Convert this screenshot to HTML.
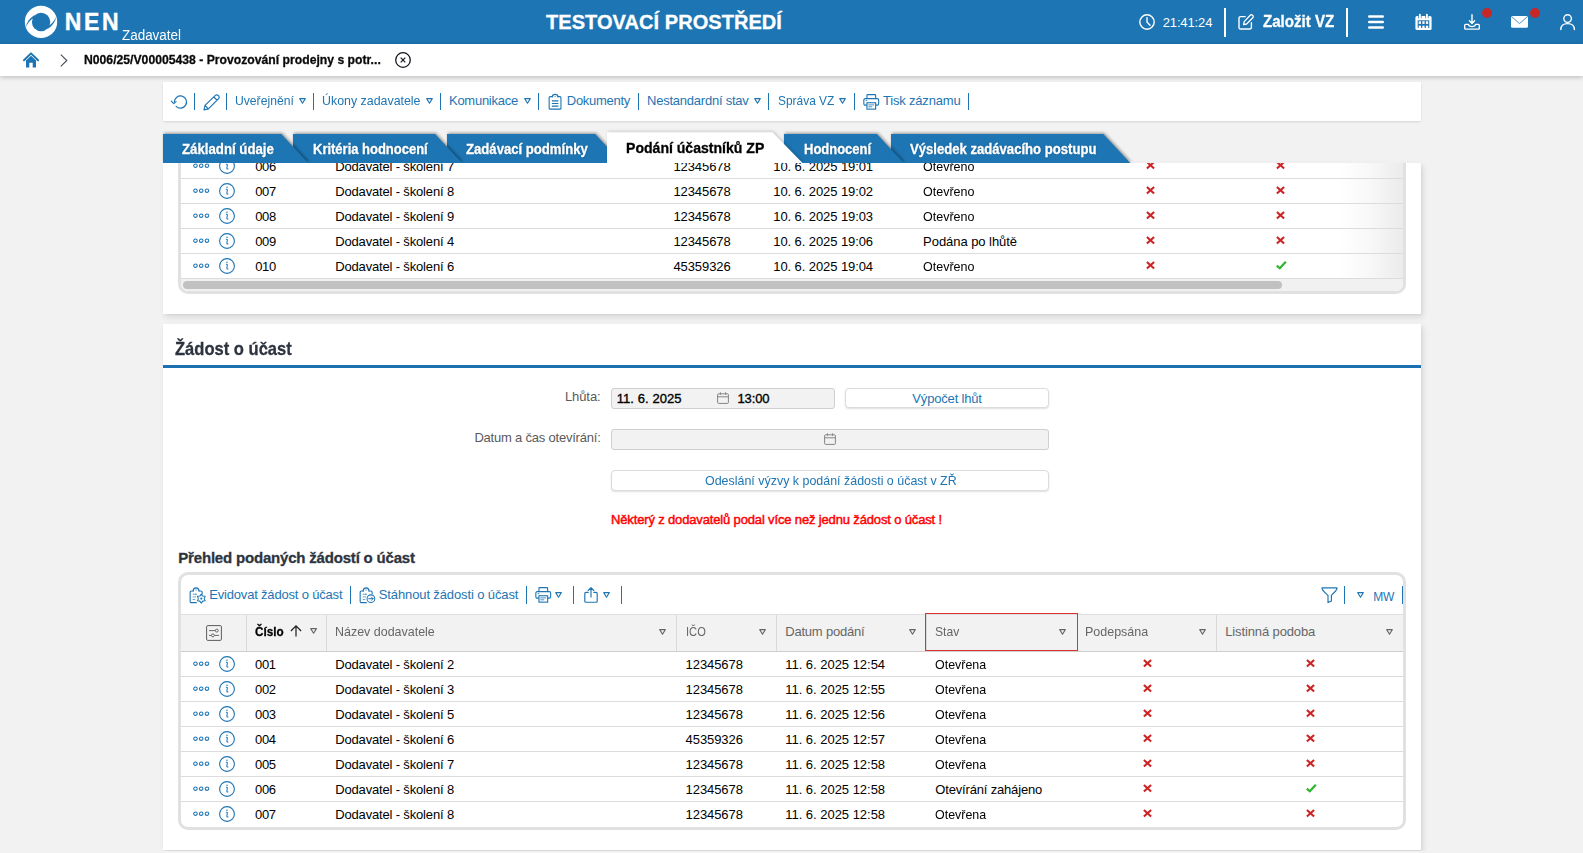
<!DOCTYPE html>
<html lang="cs">
<head>
<meta charset="utf-8">
<title>NEN - Zadavatel</title>
<style>
*{box-sizing:border-box;margin:0;padding:0}
html,body{width:1583px;height:853px;overflow:hidden}
body{background:#f2f2f2;font-family:"Liberation Sans",sans-serif;font-size:13px;color:#000;position:relative}
.abs{position:absolute}
svg{display:block;overflow:visible}
.t{position:absolute;white-space:pre;line-height:1}
</style>
</head>
<body>
<header>
<div class="abs" style="left:0;top:0;width:1583px;height:44px;background:#1d75b3"></div>
<svg class="abs" style="left:24px;top:5px" width="34" height="34" viewBox="0 0 34 34" ><circle cx="17" cy="16.9" r="16.2" fill="#fff"/><circle cx="17.1" cy="17" r="9.2" fill="#1d75b3"/><path d="M10.2 10.2 C5.5 13 2.6 17.5 1.6 22.6 C3.4 18.6 6.2 14.6 11 12.2 Z" fill="#1d75b3"/><path d="M23.8 23.8 C28.5 21 31.4 16.5 32.4 11.4 C30.6 15.4 27.8 19.4 23 21.8 Z" fill="#1d75b3"/></svg>
<span class="t" style="left:64.7px;top:11.0px;font-size:23px;font-weight:bold;color:#fff;letter-spacing:2.7px;-webkit-text-stroke:0.4px;">NEN</span>
<span class="t" style="left:122.3px;top:27.9px;font-size:14px;color:#fff;transform:scaleX(0.9596);transform-origin:0 50%;">Zadavatel</span>
<span class="t" style="left:546.0px;top:12.4px;font-size:20px;font-weight:bold;color:#fff;letter-spacing:0.06px;-webkit-text-stroke:0.3px;">TESTOVACÍ PROSTŘEDÍ</span>
<svg class="abs" style="left:1138.5px;top:14px" width="16" height="16" viewBox="0 0 16 16" ><circle cx="8" cy="8" r="7.2" fill="none" stroke="#fff" stroke-width="1.4"/><path d="M8 3.6V8l3 3.2" fill="none" stroke="#fff" stroke-width="1.4" stroke-linecap="round" stroke-linejoin="round"/></svg>
<span class="t" style="left:1162.7px;top:15.9px;font-size:13px;color:#fff;letter-spacing:-0.13px;">21:41:24</span>
<div class="abs" style="left:1224px;top:8px;width:2px;height:28.5px;background:#fff"></div>
<svg class="abs" style="left:1238px;top:14px" width="16" height="16" viewBox="0 0 16 16" ><path d="M7.2 2.6H2.6a1.6 1.6 0 0 0-1.6 1.6v9.2a1.6 1.6 0 0 0 1.6 1.6h9.2a1.6 1.6 0 0 0 1.6-1.6V8.8" fill="none" stroke="#fff" stroke-width="1.4" stroke-linecap="round"/><path d="M12.2 1.2a1.5 1.5 0 0 1 2.2 0l.4.4a1.5 1.5 0 0 1 0 2.2L8.6 10l-3 .6.6-3z" fill="none" stroke="#fff" stroke-width="1.3" stroke-linejoin="round"/></svg>
<span class="t" style="left:1262.5px;top:14.4px;font-size:16px;font-weight:bold;color:#fff;transform:scaleX(0.9436);transform-origin:0 50%;-webkit-text-stroke:0.3px;">Založit VZ</span>
<div class="abs" style="left:1346px;top:8px;width:2px;height:28.5px;background:#fff"></div>
<svg class="abs" style="left:1368px;top:14px" width="16" height="16" viewBox="0 0 16 16" ><path d="M1.2 2.5h13.6M1.2 8h13.6M1.2 13.5h13.6" stroke="#fff" stroke-width="2.4" stroke-linecap="round"/></svg>
<svg class="abs" style="left:1415px;top:14px" width="17" height="16" viewBox="0 0 17 16" ><rect x="0.400" y="2" width="16.200" height="14" rx="1.600" fill="#fff"/><rect x="2.700" y="6.300" width="11.600" height="7.600" fill="#1d75b3"/><path d="M4.900 0.500v3.800M11.900 0.500v3.800" stroke="#1d75b3" stroke-width="3.200" stroke-linecap="butt"/><path d="M4.900 0.700v3.500M11.900 0.700v3.500" stroke="#fff" stroke-width="1.900" stroke-linecap="round"/><g fill="#fff"><rect x="3.700" y="7.300" width="2.300" height="2.600"/><rect x="7.300" y="7.300" width="2.300" height="2.600"/><rect x="10.900" y="7.300" width="2.300" height="2.600"/><rect x="3.700" y="11.700" width="2.300" height="2.300"/><rect x="7.300" y="11.700" width="2.300" height="2.300"/><rect x="10.900" y="11.700" width="2.300" height="2.300"/></g></svg>
<svg class="abs" style="left:1464px;top:14px" width="16" height="16" viewBox="0 0 16 16" ><path d="M8 0.800v8.400M5.400 6.800L8 9.400l2.600-2.600" fill="none" stroke="#fff" stroke-width="1.4" stroke-linecap="round" stroke-linejoin="round"/><path d="M4.4 10.4H1.6a.9.9 0 0 0-.9.9v2.9a.9.9 0 0 0 .9.9h12.8a.9.9 0 0 0 .9-.9v-2.9a.9.9 0 0 0-.9-.9h-2.8c-.3 1.3-1.6 2.2-3.6 2.2s-3.300-.900-3.600-2.200z" fill="none" stroke="#fff" stroke-width="1.4" stroke-linejoin="round"/></svg>
<div class="abs" style="left:1482px;top:8px;width:10px;height:10px;border-radius:50%;background:#c62828"></div>
<svg class="abs" style="left:1511px;top:16px" width="17" height="12" viewBox="0 0 17 12" ><rect x="0" y="0" width="17" height="11.8" rx="1.6" fill="#fff"/><path d="M0.600 0.600L8.500 7.600L16.400 0.600" fill="none" stroke="#1d75b3" stroke-width="0.800"/></svg>
<div class="abs" style="left:1530px;top:8px;width:10px;height:10px;border-radius:50%;background:#c62828"></div>
<svg class="abs" style="left:1560px;top:14px" width="16" height="16" viewBox="0 0 16 16" ><circle cx="7.600" cy="4.600" r="3.800" fill="none" stroke="#fff" stroke-width="1.400"/><path d="M0.800 15.600C0.800 11.600 3.800 9.600 7.600 9.600s6.800 2 6.800 6" fill="none" stroke="#fff" stroke-width="1.4" stroke-linecap="round"/></svg>
</header>
<nav class="breadcrumb">
<div class="abs" style="left:0;top:44px;width:1583px;height:32px;background:#fff;box-shadow:0 1px 5px rgba(0,0,0,.25)"></div>
<svg class="abs" style="left:23px;top:52px" width="16" height="16" viewBox="0 0 16 16" ><path d="M1 8.200L8 1.400l7 6.800" fill="none" stroke="#1d75b3" stroke-width="2" stroke-linecap="round" stroke-linejoin="round"/><path d="M3 8.400L8 3.800l5 4.600V15.400H9.700V10.800H6.300V15.400H3z" fill="#1d75b3"/></svg>
<svg class="abs" style="left:60px;top:53.5px" width="8" height="13" viewBox="0 0 8 13" ><path d="M0.800 0.600L6.800 6.500L0.800 12.400" fill="none" stroke="#444a55" stroke-width="1.100"/></svg>
<span class="t" style="left:84.1px;top:53.0px;font-size:13px;font-weight:bold;color:#0a0a0a;transform:scaleX(0.9378);transform-origin:0 50%;-webkit-text-stroke:0.3px;">N006/25/V00005438 - Provozování prodejny s potr...</span>
<svg class="abs" style="left:394.5px;top:52px" width="16" height="16" viewBox="0 0 16 16" ><circle cx="8" cy="8" r="7.300" fill="none" stroke="#15151f" stroke-width="1.300"/><path d="M5.700 5.700l4.600 4.600M10.300 5.700l-4.600 4.600" stroke="#15151f" stroke-width="1.200"/></svg>
</nav>
<main>
<div class="toolbar">
<div class="abs" style="left:163px;top:82px;width:1258px;height:39px;background:#fff;box-shadow:0 1px 2px rgba(0,0,0,.12)"></div>
<svg class="abs" style="left:171px;top:94px" width="17" height="16" viewBox="0 0 17 16" ><path d="M3.350 8A6.100 6.100 0 1 1 5.090 12.310" fill="none" stroke="#1d75b3" stroke-width="1.150" stroke-linecap="round"/><path d="M0.400 7.200L2.700 9.600L5.100 7.600" fill="none" stroke="#1d75b3" stroke-width="1.150" stroke-linecap="round" stroke-linejoin="round"/></svg>
<div class="abs" style="left:194px;top:93px;width:1px;height:17px;background:#1d75b3"></div>
<div class="abs" style="left:226px;top:93px;width:1px;height:17px;background:#1d75b3"></div>
<div class="abs" style="left:313px;top:93px;width:1px;height:17px;background:#1d75b3"></div>
<div class="abs" style="left:440px;top:93px;width:1px;height:17px;background:#1d75b3"></div>
<div class="abs" style="left:538px;top:93px;width:1px;height:17px;background:#1d75b3"></div>
<div class="abs" style="left:638px;top:93px;width:1px;height:17px;background:#1d75b3"></div>
<div class="abs" style="left:768px;top:93px;width:1px;height:17px;background:#1d75b3"></div>
<div class="abs" style="left:854px;top:93px;width:1px;height:17px;background:#1d75b3"></div>
<div class="abs" style="left:968px;top:93px;width:1px;height:17px;background:#1d75b3"></div>
<svg class="abs" style="left:202.5px;top:94px" width="17" height="16" viewBox="0 0 17 16" ><path d="M12.400 1.400a1.900 1.900 0 0 1 2.700 0l.5.5a1.900 1.900 0 0 1 0 2.700L5.400 14.800L1 15.800l1-4.400zM10.800 3l3.200 3.200M2 11.400l3.400 3.400" fill="none" stroke="#1d75b3" stroke-width="1.200" stroke-linejoin="round"/></svg>
<span class="t" style="left:235.0px;top:93.6px;font-size:13px;color:#1d75b3;transform:scaleX(0.9352);transform-origin:0 50%;">Uveřejnění</span>
<svg class="abs" style="left:298.5px;top:98px" width="7" height="5.8" viewBox="0 0 7 5.8" ><path d="M0.7 0.6H6.3 L3.5 5.2 Z" fill="none" stroke="#1d75b3" stroke-width="1.1" stroke-linejoin="round"/></svg>
<span class="t" style="left:322.2px;top:93.6px;font-size:13px;color:#1d75b3;transform:scaleX(0.9531);transform-origin:0 50%;">Úkony zadavatele</span>
<svg class="abs" style="left:425.5px;top:98px" width="7" height="5.8" viewBox="0 0 7 5.8" ><path d="M0.7 0.6H6.3 L3.5 5.2 Z" fill="none" stroke="#1d75b3" stroke-width="1.1" stroke-linejoin="round"/></svg>
<span class="t" style="left:449.0px;top:93.6px;font-size:13px;color:#1d75b3;letter-spacing:-0.27px;">Komunikace</span>
<svg class="abs" style="left:523.8px;top:98px" width="7" height="5.8" viewBox="0 0 7 5.8" ><path d="M0.7 0.6H6.3 L3.5 5.2 Z" fill="none" stroke="#1d75b3" stroke-width="1.1" stroke-linejoin="round"/></svg>
<svg class="abs" style="left:547.5px;top:94px" width="14" height="16" viewBox="0 0 14 16" ><path d="M4.400 2.650H2.150a1 1 0 0 0-1 1V14.150a1 1 0 0 0 1 1H11.950a1 1 0 0 0 1-1V3.650a1 1 0 0 0-1-1H9.900" fill="none" stroke="#1d75b3" stroke-width="1.100" stroke-linecap="round"/><path d="M4.400 2.650C4.400 0.900 5.600 0.400 7.150 0.400C8.700 0.400 9.900 0.900 9.900 2.650" fill="none" stroke="#1d75b3" stroke-width="1.100" stroke-linecap="round"/><circle cx="7.100" cy="2.500" r="0.550" fill="#1d75b3"/><path d="M3.900 6.900h6.500M3.900 9.500h6.500M3.900 12.100h6.500" stroke="#1d75b3" stroke-width="1.100"/></svg>
<span class="t" style="left:566.8px;top:93.6px;font-size:13px;color:#1d75b3;letter-spacing:-0.28px;">Dokumenty</span>
<span class="t" style="left:647.0px;top:93.6px;font-size:13px;color:#1d75b3;letter-spacing:-0.23px;">Nestandardní stav</span>
<svg class="abs" style="left:754px;top:98px" width="7" height="5.8" viewBox="0 0 7 5.8" ><path d="M0.7 0.6H6.3 L3.5 5.2 Z" fill="none" stroke="#1d75b3" stroke-width="1.1" stroke-linejoin="round"/></svg>
<span class="t" style="left:777.7px;top:93.6px;font-size:13px;color:#1d75b3;transform:scaleX(0.9166);transform-origin:0 50%;">Správa VZ</span>
<svg class="abs" style="left:839.3px;top:98px" width="7" height="5.8" viewBox="0 0 7 5.8" ><path d="M0.7 0.6H6.3 L3.5 5.2 Z" fill="none" stroke="#1d75b3" stroke-width="1.1" stroke-linejoin="round"/></svg>
<svg class="abs" style="left:862.5px;top:94px" width="17" height="16" viewBox="0 0 17 16" ><path d="M3.950 4.600V1.250a.6.600 0 0 1 .600-.600h7.500a.600.600 0 0 1 .600.600V4.600" fill="none" stroke="#1d75b3" stroke-width="1.100"/><path d="M3.950 11.150H2.150a1.300 1.300 0 0 1-1.300-1.300V5.950a1.300 1.300 0 0 1 1.300-1.300H14.350a1.300 1.300 0 0 1 1.300 1.300V9.850a1.300 1.300 0 0 1-1.300 1.300H12.650" fill="none" stroke="#1d75b3" stroke-width="1.100"/><rect x="3.950" y="8.750" width="8.700" height="6.400" fill="none" stroke="#1d75b3" stroke-width="1.100"/><path d="M5.300 10.900h5.900M5.300 12.800h3.900" stroke="#1d75b3" stroke-width="0.800"/><path d="M2.700 6.500h1.600" stroke="#1d75b3" stroke-width="0.800"/></svg>
<span class="t" style="left:882.9px;top:93.6px;font-size:13px;color:#1d75b3;letter-spacing:-0.18px;">Tisk záznamu</span>
</div>
<section class="tabpanel">
<div class="abs" style="left:163px;top:163px;width:1258px;height:151px;background:#fff;box-shadow:2px 3px 6px rgba(0,0,0,.11),1px 1px 2px rgba(0,0,0,.04);overflow:hidden">
<div class="abs" style="left:15px;top:-40px;width:1228px;height:171px;border:3px solid #dfe1e3;border-radius:0 0 10px 10px;background:#fff"></div>
<div class="abs" style="left:1176px;top:0;width:64px;height:115px;background:linear-gradient(90deg,rgba(230,230,230,0) 0%,rgba(234,234,234,.3) 45%,rgba(234,234,234,.95) 100%)"></div>
<div class="abs" style="left:18px;top:15px;width:1222px;height:1px;background:#dcdcdc"></div>
<div class="abs" style="left:18px;top:40px;width:1222px;height:1px;background:#dcdcdc"></div>
<div class="abs" style="left:18px;top:65px;width:1222px;height:1px;background:#dcdcdc"></div>
<div class="abs" style="left:18px;top:90px;width:1222px;height:1px;background:#dcdcdc"></div>
<div class="abs" style="left:18px;top:115px;width:1222px;height:1px;background:#dcdcdc"></div>
<div class="abs" style="left:18px;top:116px;width:1222px;height:12px;background:#f1f1f1;border-radius:0 0 7px 7px"></div>
<div class="abs" style="left:20px;top:118px;width:1099px;height:8px;background:#c1c1c1;border-radius:4px"></div>
</div>
<div class="abs" style="left:0;top:163px;width:1583px;height:130px;overflow:hidden">
<svg class="abs" style="left:192.8px;top:-0.05px" width="17" height="5.4" viewBox="0 0 17 5.4" ><g fill="none" stroke="#1d75b3" stroke-width="1.050"><ellipse cx="2.450" cy="2.700" rx="1.800" ry="1.680"/><ellipse cx="8.200" cy="2.700" rx="1.800" ry="1.680"/><ellipse cx="14" cy="2.700" rx="1.800" ry="1.680"/></g></svg>
<svg class="abs" style="left:219px;top:-5px" width="16" height="16" viewBox="0 0 16 16" ><circle cx="8" cy="8" r="7.400" fill="none" stroke="#1d75b3" stroke-width="1.100"/><path d="M7.300 6.300c.9-.1 1.100.2 1 .9L7.900 10c-.1.800.2 1.100 1 .9" fill="none" stroke="#1d75b3" stroke-width="1.050" stroke-linecap="round"/><circle cx="8" cy="4.300" r=".750" fill="#1d75b3"/></svg>
<span class="t" style="left:255.2px;top:-3.1px;font-size:13px;letter-spacing:-0.35px;">006</span>
<span class="t" style="left:335.2px;top:-3.1px;font-size:13px;letter-spacing:-0.16px;">Dodavatel - školení 7</span>
<span class="t" style="left:673.4px;top:-3.1px;font-size:13px;letter-spacing:-0.08px;">12345678</span>
<span class="t" style="left:773.3px;top:-3.1px;font-size:13px;letter-spacing:-0.09px;">10. 6. 2025 19:01</span>
<span class="t" style="left:923.1px;top:-3.1px;font-size:13px;transform:scaleX(0.9629);transform-origin:0 50%;">Otevřeno</span>
<svg class="abs" style="left:1145.9px;top:-2.2px" width="9" height="8.4" viewBox="0 0 9 8.4" ><path d="M0.900 0.900L8.100 7.500M8.100 0.900L0.900 7.500" stroke="#cc2424" stroke-width="2.100" stroke-linecap="butt"/></svg>
<svg class="abs" style="left:1276px;top:-2.2px" width="9" height="8.4" viewBox="0 0 9 8.4" ><path d="M0.900 0.900L8.100 7.500M8.100 0.900L0.900 7.500" stroke="#cc2424" stroke-width="2.100" stroke-linecap="butt"/></svg>
<svg class="abs" style="left:192.8px;top:24.95px" width="17" height="5.4" viewBox="0 0 17 5.4" ><g fill="none" stroke="#1d75b3" stroke-width="1.050"><ellipse cx="2.450" cy="2.700" rx="1.800" ry="1.680"/><ellipse cx="8.200" cy="2.700" rx="1.800" ry="1.680"/><ellipse cx="14" cy="2.700" rx="1.800" ry="1.680"/></g></svg>
<svg class="abs" style="left:219px;top:20px" width="16" height="16" viewBox="0 0 16 16" ><circle cx="8" cy="8" r="7.400" fill="none" stroke="#1d75b3" stroke-width="1.100"/><path d="M7.300 6.300c.9-.1 1.100.2 1 .9L7.900 10c-.1.800.2 1.100 1 .9" fill="none" stroke="#1d75b3" stroke-width="1.050" stroke-linecap="round"/><circle cx="8" cy="4.300" r=".750" fill="#1d75b3"/></svg>
<span class="t" style="left:255.2px;top:21.9px;font-size:13px;letter-spacing:-0.35px;">007</span>
<span class="t" style="left:335.2px;top:21.9px;font-size:13px;letter-spacing:-0.16px;">Dodavatel - školení 8</span>
<span class="t" style="left:673.4px;top:21.9px;font-size:13px;letter-spacing:-0.08px;">12345678</span>
<span class="t" style="left:773.3px;top:21.9px;font-size:13px;letter-spacing:-0.09px;">10. 6. 2025 19:02</span>
<span class="t" style="left:923.1px;top:21.9px;font-size:13px;transform:scaleX(0.9629);transform-origin:0 50%;">Otevřeno</span>
<svg class="abs" style="left:1145.9px;top:22.8px" width="9" height="8.4" viewBox="0 0 9 8.4" ><path d="M0.900 0.900L8.100 7.500M8.100 0.900L0.900 7.500" stroke="#cc2424" stroke-width="2.100" stroke-linecap="butt"/></svg>
<svg class="abs" style="left:1276px;top:22.8px" width="9" height="8.4" viewBox="0 0 9 8.4" ><path d="M0.900 0.900L8.100 7.500M8.100 0.900L0.900 7.500" stroke="#cc2424" stroke-width="2.100" stroke-linecap="butt"/></svg>
<svg class="abs" style="left:192.8px;top:49.95px" width="17" height="5.4" viewBox="0 0 17 5.4" ><g fill="none" stroke="#1d75b3" stroke-width="1.050"><ellipse cx="2.450" cy="2.700" rx="1.800" ry="1.680"/><ellipse cx="8.200" cy="2.700" rx="1.800" ry="1.680"/><ellipse cx="14" cy="2.700" rx="1.800" ry="1.680"/></g></svg>
<svg class="abs" style="left:219px;top:45px" width="16" height="16" viewBox="0 0 16 16" ><circle cx="8" cy="8" r="7.400" fill="none" stroke="#1d75b3" stroke-width="1.100"/><path d="M7.300 6.300c.9-.1 1.100.2 1 .9L7.900 10c-.1.800.2 1.100 1 .9" fill="none" stroke="#1d75b3" stroke-width="1.050" stroke-linecap="round"/><circle cx="8" cy="4.300" r=".750" fill="#1d75b3"/></svg>
<span class="t" style="left:255.2px;top:46.9px;font-size:13px;letter-spacing:-0.35px;">008</span>
<span class="t" style="left:335.2px;top:46.9px;font-size:13px;letter-spacing:-0.16px;">Dodavatel - školení 9</span>
<span class="t" style="left:673.4px;top:46.9px;font-size:13px;letter-spacing:-0.08px;">12345678</span>
<span class="t" style="left:773.3px;top:46.9px;font-size:13px;letter-spacing:-0.09px;">10. 6. 2025 19:03</span>
<span class="t" style="left:923.1px;top:46.9px;font-size:13px;transform:scaleX(0.9629);transform-origin:0 50%;">Otevřeno</span>
<svg class="abs" style="left:1145.9px;top:47.8px" width="9" height="8.4" viewBox="0 0 9 8.4" ><path d="M0.900 0.900L8.100 7.500M8.100 0.900L0.900 7.500" stroke="#cc2424" stroke-width="2.100" stroke-linecap="butt"/></svg>
<svg class="abs" style="left:1276px;top:47.8px" width="9" height="8.4" viewBox="0 0 9 8.4" ><path d="M0.900 0.900L8.100 7.500M8.100 0.900L0.900 7.500" stroke="#cc2424" stroke-width="2.100" stroke-linecap="butt"/></svg>
<svg class="abs" style="left:192.8px;top:74.95px" width="17" height="5.4" viewBox="0 0 17 5.4" ><g fill="none" stroke="#1d75b3" stroke-width="1.050"><ellipse cx="2.450" cy="2.700" rx="1.800" ry="1.680"/><ellipse cx="8.200" cy="2.700" rx="1.800" ry="1.680"/><ellipse cx="14" cy="2.700" rx="1.800" ry="1.680"/></g></svg>
<svg class="abs" style="left:219px;top:70px" width="16" height="16" viewBox="0 0 16 16" ><circle cx="8" cy="8" r="7.400" fill="none" stroke="#1d75b3" stroke-width="1.100"/><path d="M7.300 6.300c.9-.1 1.100.2 1 .9L7.900 10c-.1.800.2 1.100 1 .9" fill="none" stroke="#1d75b3" stroke-width="1.050" stroke-linecap="round"/><circle cx="8" cy="4.300" r=".750" fill="#1d75b3"/></svg>
<span class="t" style="left:255.2px;top:71.9px;font-size:13px;letter-spacing:-0.35px;">009</span>
<span class="t" style="left:335.2px;top:71.9px;font-size:13px;letter-spacing:-0.16px;">Dodavatel - školení 4</span>
<span class="t" style="left:673.4px;top:71.9px;font-size:13px;letter-spacing:-0.08px;">12345678</span>
<span class="t" style="left:773.3px;top:71.9px;font-size:13px;letter-spacing:-0.09px;">10. 6. 2025 19:06</span>
<span class="t" style="left:923.1px;top:71.9px;font-size:13px;letter-spacing:-0.05px;">Podána po lhůtě</span>
<svg class="abs" style="left:1145.9px;top:72.8px" width="9" height="8.4" viewBox="0 0 9 8.4" ><path d="M0.900 0.900L8.100 7.500M8.100 0.900L0.900 7.500" stroke="#cc2424" stroke-width="2.100" stroke-linecap="butt"/></svg>
<svg class="abs" style="left:1276px;top:72.8px" width="9" height="8.4" viewBox="0 0 9 8.4" ><path d="M0.900 0.900L8.100 7.500M8.100 0.900L0.900 7.500" stroke="#cc2424" stroke-width="2.100" stroke-linecap="butt"/></svg>
<svg class="abs" style="left:192.8px;top:99.95px" width="17" height="5.4" viewBox="0 0 17 5.4" ><g fill="none" stroke="#1d75b3" stroke-width="1.050"><ellipse cx="2.450" cy="2.700" rx="1.800" ry="1.680"/><ellipse cx="8.200" cy="2.700" rx="1.800" ry="1.680"/><ellipse cx="14" cy="2.700" rx="1.800" ry="1.680"/></g></svg>
<svg class="abs" style="left:219px;top:95px" width="16" height="16" viewBox="0 0 16 16" ><circle cx="8" cy="8" r="7.400" fill="none" stroke="#1d75b3" stroke-width="1.100"/><path d="M7.300 6.300c.9-.1 1.100.2 1 .9L7.900 10c-.1.800.2 1.100 1 .9" fill="none" stroke="#1d75b3" stroke-width="1.050" stroke-linecap="round"/><circle cx="8" cy="4.300" r=".750" fill="#1d75b3"/></svg>
<span class="t" style="left:255.2px;top:96.9px;font-size:13px;letter-spacing:-0.35px;">010</span>
<span class="t" style="left:335.2px;top:96.9px;font-size:13px;letter-spacing:-0.16px;">Dodavatel - školení 6</span>
<span class="t" style="left:673.4px;top:96.9px;font-size:13px;letter-spacing:-0.08px;">45359326</span>
<span class="t" style="left:773.3px;top:96.9px;font-size:13px;letter-spacing:-0.09px;">10. 6. 2025 19:04</span>
<span class="t" style="left:923.1px;top:96.9px;font-size:13px;transform:scaleX(0.9629);transform-origin:0 50%;">Otevřeno</span>
<svg class="abs" style="left:1145.9px;top:97.8px" width="9" height="8.4" viewBox="0 0 9 8.4" ><path d="M0.900 0.900L8.100 7.500M8.100 0.900L0.900 7.500" stroke="#cc2424" stroke-width="2.100" stroke-linecap="butt"/></svg>
<svg class="abs" style="left:1276.2px;top:97.8px" width="10.5" height="8.4" viewBox="0 0 10.5 8.4" ><path d="M0.800 4.600L3.800 7.300L9.800 0.800" fill="none" stroke="#2eb52e" stroke-width="2.200"/></svg>
</div>
<div class="abs" style="left:0;top:0;width:1583px;height:163px;overflow:hidden">
<svg class="abs" style="left:447.2px;top:128px;filter:drop-shadow(1.500px -0.5px 1.500px rgba(0,0,0,.38))" width="181.2" height="35" viewBox="0 0 181.2 35"><path d="M0 6H148.2 L175.2 35H0z" fill="#1d75b3"/></svg><span class="t" style="left:466.0px;top:142.4px;font-size:14px;font-weight:bold;color:#fff;transform:scaleX(0.9374);transform-origin:0 50%;text-shadow:0 0 2px rgba(0,0,0,.3);-webkit-text-stroke:0.3px;">Zadávací podmínky</span>
<svg class="abs" style="left:292.7px;top:128px;filter:drop-shadow(1.500px -0.5px 1.500px rgba(0,0,0,.38))" width="175.1" height="35" viewBox="0 0 175.1 35"><path d="M0 6H142.1 L169.1 35H0z" fill="#1d75b3"/></svg><span class="t" style="left:312.5px;top:142.4px;font-size:14px;font-weight:bold;color:#fff;transform:scaleX(0.9273);transform-origin:0 50%;text-shadow:0 0 2px rgba(0,0,0,.3);-webkit-text-stroke:0.3px;">Kritéria hodnocení</span>
<svg class="abs" style="left:163px;top:128px;filter:drop-shadow(1.500px -0.5px 1.500px rgba(0,0,0,.38))" width="151.3" height="35" viewBox="0 0 151.3 35"><path d="M0 6H118.3 L145.3 35H0z" fill="#1d75b3"/></svg><span class="t" style="left:181.8px;top:142.4px;font-size:14px;font-weight:bold;color:#fff;transform:scaleX(0.9450);transform-origin:0 50%;text-shadow:0 0 2px rgba(0,0,0,.3);-webkit-text-stroke:0.3px;">Základní údaje</span>
<svg class="abs" style="left:890.5px;top:128px;filter:drop-shadow(1.500px -0.5px 1.500px rgba(0,0,0,.38))" width="245.3" height="35" viewBox="0 0 245.3 35"><path d="M0 6H212.3 L239.3 35H0z" fill="#1d75b3"/></svg><span class="t" style="left:909.6px;top:142.4px;font-size:14px;font-weight:bold;color:#fff;transform:scaleX(0.9359);transform-origin:0 50%;text-shadow:0 0 2px rgba(0,0,0,.3);-webkit-text-stroke:0.3px;">Výsledek zadávacího postupu</span>
<svg class="abs" style="left:784.4px;top:128px;filter:drop-shadow(1.500px -0.5px 1.500px rgba(0,0,0,.38))" width="125.9" height="35" viewBox="0 0 125.9 35"><path d="M0 6H92.9 L119.9 35H0z" fill="#1d75b3"/></svg><span class="t" style="left:803.5px;top:142.4px;font-size:14px;font-weight:bold;color:#fff;transform:scaleX(0.9275);transform-origin:0 50%;text-shadow:0 0 2px rgba(0,0,0,.3);-webkit-text-stroke:0.3px;">Hodnocení</span>
<svg class="abs" style="left:607px;top:126px;filter:drop-shadow(1px -0.5px 1.500px rgba(0,0,0,.16))" width="200" height="37" viewBox="0 0 200 37"><path d="M0 6.200H165.500L195.500 37H0z" fill="#fff"/></svg>
<span class="t" style="left:625.7px;top:140.3px;font-size:15px;font-weight:bold;transform:scaleX(0.9374);transform-origin:0 50%;-webkit-text-stroke:0.3px;">Podání účastníků ZP</span>
</div>
</section>
<section class="zadost">
<div class="abs" style="left:163px;top:324px;width:1258px;height:526px;background:#fff;box-shadow:2px 3px 6px rgba(0,0,0,.11),1px 1px 2px rgba(0,0,0,.04);clip-path:inset(-10px -10px -1px -10px)"></div>
<span class="t" style="left:175.2px;top:339.9px;font-size:18.5px;font-weight:bold;color:#2d3440;transform:scaleX(0.8946);transform-origin:0 50%;-webkit-text-stroke:0.3px;">Žádost o účast</span>
<div class="abs" style="left:163px;top:365px;width:1258px;height:3px;background:#1a70b0"></div>
<span class="t" style="left:564.9px;top:389.7px;font-size:13px;color:#5a5a5a;letter-spacing:-0.07px;">Lhůta:</span>
<span class="t" style="left:474.4px;top:430.9px;font-size:13px;color:#5a5a5a;letter-spacing:-0.21px;">Datum a čas otevírání:</span>
<div class="abs" style="left:611px;top:388px;width:224px;height:21px;background:#f2f2f2;border:1px solid #cfcfcf;border-radius:3px"></div>
<div class="abs" style="left:845px;top:388px;width:204px;height:20px;background:#fff;border:1px solid #dcdcdc;border-radius:4px;box-shadow:0 1px 2px rgba(0,0,0,.13)"></div>
<div class="abs" style="left:611px;top:429px;width:438px;height:21px;background:#f2f2f2;border:1px solid #cfcfcf;border-radius:3px"></div>
<div class="abs" style="left:611px;top:470px;width:438px;height:21px;background:#fff;border:1px solid #dcdcdc;border-radius:4px;box-shadow:0 1px 2px rgba(0,0,0,.13)"></div>
<span class="t" style="left:616.7px;top:392.2px;font-size:13px;letter-spacing:0.08px;-webkit-text-stroke:0.35px #000;">11. 6. 2025</span>
<span class="t" style="left:737.4px;top:392.2px;font-size:13px;letter-spacing:-0.11px;-webkit-text-stroke:0.35px #000;">13:00</span>
<svg class="abs" style="left:717px;top:392px" width="12" height="12" viewBox="0 0 12 12" ><rect x=".6" y="1.800" width="10.800" height="9.600" rx="1" fill="none" stroke="#858585" stroke-width="1"/><path d="M.6 4.800h10.800M3.400 .3v2.600M8.600 .3v2.600" stroke="#858585" stroke-width="1"/></svg>
<svg class="abs" style="left:824px;top:433px" width="12" height="12" viewBox="0 0 12 12" ><rect x=".6" y="1.800" width="10.800" height="9.600" rx="1" fill="none" stroke="#858585" stroke-width="1"/><path d="M.6 4.800h10.800M3.400 .3v2.600M8.600 .3v2.600" stroke="#858585" stroke-width="1"/></svg>
<span class="t" style="left:912.3px;top:391.9px;font-size:13px;color:#1d75b3;letter-spacing:-0.17px;">Výpočet lhůt</span>
<span class="t" style="left:704.6px;top:474.0px;font-size:13px;color:#1d75b3;transform:scaleX(0.9570);transform-origin:0 50%;">Odeslání výzvy k podání žádosti o účast v ZŘ</span>
<span class="t" style="left:611.0px;top:513.0px;font-size:13px;color:#ff0000;letter-spacing:-0.15px;-webkit-text-stroke:0.45px;">Některý z dodavatelů podal více než jednu žádost o účast !</span>
<span class="t" style="left:178.3px;top:550.0px;font-size:15px;font-weight:bold;color:#2d3440;letter-spacing:-0.19px;-webkit-text-stroke:0.3px;">Přehled podaných žádostí o účast</span>
<div class="abs" style="left:178px;top:572px;width:1228px;height:258px;border:3px solid #dfe1e3;border-radius:10px;background:#fff"></div>
<svg class="abs" style="left:188.5px;top:586.5px" width="17" height="17" viewBox="0 0 17 17" ><path d="M4.200 3.950H2.450a1.300 1.300 0 0 0-1.300 1.300V14.350a1.300 1.300 0 0 0 1.300 1.300H7.300M10 3.950H11.850a1.300 1.300 0 0 1 1.300 1.300V6.700" fill="none" stroke="#1d75b3" stroke-width="1.100" stroke-linecap="round"/><path d="M4.200 3.950C4.200 1.700 5.500 0.850 7.100 0.850C8.700 0.850 10 1.700 10 3.950" fill="none" stroke="#1d75b3" stroke-width="1.100" stroke-linecap="round"/><circle cx="7.100" cy="2.900" r="0.550" fill="#1d75b3"/><path d="M3.800 7.200h0.900M5.400 7.200h2.300M3.800 9.900h0.900M5.400 9.900h1.300M3.800 12.500h0.900M5.400 12.500h0.800" stroke="#1d75b3" stroke-width="1"/><path d="M12.30 7.10 L13.75 9.09 L16.20 9.35 L15.20 11.60 L16.20 13.85 L13.75 14.11 L12.30 16.10 L10.85 14.11 L8.40 13.85 L9.40 11.60 L8.40 9.35 L10.85 9.09 Z" fill="#fff" stroke="#1d75b3" stroke-width="1.050" stroke-linejoin="round"/><circle cx="12.3" cy="11.6" r="1.100" fill="#1d75b3"/></svg>
<span class="t" style="left:209.2px;top:587.7px;font-size:13px;color:#1d75b3;letter-spacing:-0.18px;">Evidovat žádost o účast</span>
<div class="abs" style="left:350px;top:586px;width:1px;height:18px;background:#1d75b3"></div>
<svg class="abs" style="left:358.5px;top:586.5px" width="17" height="17" viewBox="0 0 17 17" ><path d="M4.200 3.950H2.450a1.300 1.300 0 0 0-1.300 1.300V14.350a1.300 1.300 0 0 0 1.300 1.300H7.300M10 3.950H11.850a1.300 1.300 0 0 1 1.300 1.300V6.700" fill="none" stroke="#1d75b3" stroke-width="1.100" stroke-linecap="round"/><path d="M4.200 3.950C4.200 1.700 5.500 0.850 7.100 0.850C8.700 0.850 10 1.700 10 3.950" fill="none" stroke="#1d75b3" stroke-width="1.100" stroke-linecap="round"/><circle cx="7.100" cy="2.900" r="0.550" fill="#1d75b3"/><path d="M3.800 7.200h0.900M5.400 7.200h2.300M3.800 9.900h0.900M5.400 9.900h1.300M3.800 12.500h0.900M5.400 12.500h0.800" stroke="#1d75b3" stroke-width="1"/><circle cx="11.900" cy="11.700" r="3.850" fill="#fff" stroke="#1d75b3" stroke-width="1.050"/><path d="M9.700 11.700h4.200M12.500 10.100l1.600 1.600-1.600 1.600" fill="none" stroke="#1d75b3" stroke-width="1" stroke-linecap="round" stroke-linejoin="round"/></svg>
<span class="t" style="left:378.8px;top:587.7px;font-size:13px;color:#1d75b3;letter-spacing:-0.12px;">Stáhnout žádosti o účast</span>
<div class="abs" style="left:526px;top:586px;width:1px;height:18px;background:#1d75b3"></div>
<svg class="abs" style="left:534.7px;top:587px" width="17" height="16" viewBox="0 0 17 16" ><path d="M3.950 4.600V1.250a.6.600 0 0 1 .600-.600h7.500a.600.600 0 0 1 .600.600V4.600" fill="none" stroke="#1d75b3" stroke-width="1.100"/><path d="M3.950 11.150H2.150a1.300 1.300 0 0 1-1.300-1.300V5.950a1.300 1.300 0 0 1 1.300-1.300H14.350a1.300 1.300 0 0 1 1.300 1.300V9.850a1.300 1.300 0 0 1-1.300 1.300H12.650" fill="none" stroke="#1d75b3" stroke-width="1.100"/><rect x="3.950" y="8.750" width="8.700" height="6.400" fill="none" stroke="#1d75b3" stroke-width="1.100"/><path d="M5.300 10.900h5.900M5.300 12.800h3.900" stroke="#1d75b3" stroke-width="0.800"/><path d="M2.700 6.500h1.600" stroke="#1d75b3" stroke-width="0.800"/></svg>
<svg class="abs" style="left:555.2px;top:592.3px" width="7" height="5.8" viewBox="0 0 7 5.8" ><path d="M0.7 0.6H6.3 L3.5 5.2 Z" fill="none" stroke="#1d75b3" stroke-width="1.1" stroke-linejoin="round"/></svg>
<div class="abs" style="left:573px;top:586px;width:1px;height:18px;background:#1d75b3"></div>
<svg class="abs" style="left:584px;top:587px" width="14" height="16" viewBox="0 0 14 16" ><path d="M4.200 5.400H1.800a1 1 0 0 0-1 1v7.800a1 1 0 0 0 1 1h10.400a1 1 0 0 0 1-1V6.400a1 1 0 0 0-1-1H9.800" fill="none" stroke="#1d75b3" stroke-width="1.150" stroke-linecap="round"/><path d="M7 10V0.900M4.200 3.500L7 .7l2.800 2.800" fill="none" stroke="#1d75b3" stroke-width="1.150" stroke-linecap="round" stroke-linejoin="round"/></svg>
<svg class="abs" style="left:603.2px;top:592.3px" width="7" height="5.8" viewBox="0 0 7 5.8" ><path d="M0.7 0.6H6.3 L3.5 5.2 Z" fill="none" stroke="#1d75b3" stroke-width="1.1" stroke-linejoin="round"/></svg>
<div class="abs" style="left:621px;top:586px;width:1px;height:18px;background:#1d75b3"></div>
<svg class="abs" style="left:1320.5px;top:587px" width="17" height="16" viewBox="0 0 17 16" ><path d="M1 .8h15c.300 2.600-3 4.600-5.600 7.600V14L7 15.600V8.400C4 5.400.7 3.400 1 .8z" fill="none" stroke="#1d75b3" stroke-width="1.150" stroke-linejoin="round"/></svg>
<div class="abs" style="left:1344px;top:586px;width:1px;height:18px;background:#1d75b3"></div>
<svg class="abs" style="left:1357.1px;top:592.2px" width="7" height="5.8" viewBox="0 0 7 5.8" ><path d="M0.7 0.6H6.3 L3.5 5.2 Z" fill="none" stroke="#1d75b3" stroke-width="1.1" stroke-linejoin="round"/></svg>
<span class="t" style="left:1373.3px;top:591.2px;font-size:12px;color:#1d75b3;letter-spacing:-0.23px;">MW</span>
<div class="abs" style="left:1402px;top:586px;width:1px;height:18px;background:#1d75b3"></div>
<div class="abs" style="left:181px;top:614px;width:1222px;height:38px;background:#f2f2f2;border-top:1px solid #e0e0e0;border-bottom:1px solid #cfcfcf"></div>
<div class="abs" style="left:246px;top:615px;width:1px;height:36px;background:#d9d9d9"></div>
<div class="abs" style="left:326px;top:615px;width:1px;height:36px;background:#d9d9d9"></div>
<div class="abs" style="left:676px;top:615px;width:1px;height:36px;background:#d9d9d9"></div>
<div class="abs" style="left:776px;top:615px;width:1px;height:36px;background:#d9d9d9"></div>
<div class="abs" style="left:926px;top:615px;width:1px;height:36px;background:#d9d9d9"></div>
<div class="abs" style="left:1077px;top:615px;width:1px;height:36px;background:#d9d9d9"></div>
<div class="abs" style="left:1216px;top:615px;width:1px;height:36px;background:#d9d9d9"></div>
<svg class="abs" style="left:206px;top:625px" width="16" height="16" viewBox="0 0 16 16" ><rect x=".6" y=".6" width="14.800" height="14.800" rx="1.200" fill="none" stroke="#5c5c5c" stroke-width="1"/><path d="M3 5.600h6.200M3 10.400h2.200M8.600 10.400h4.400" stroke="#5c5c5c" stroke-width="0.900"/><circle cx="10.800" cy="5.600" r="1.450" fill="none" stroke="#5c5c5c" stroke-width="0.900"/><circle cx="6.900" cy="10.400" r="1.450" fill="none" stroke="#5c5c5c" stroke-width="0.900"/></svg>
<span class="t" style="left:255.1px;top:625.2px;font-size:13px;font-weight:bold;transform:scaleX(0.8995);transform-origin:0 50%;-webkit-text-stroke:0.3px;">Číslo</span>
<svg class="abs" style="left:290px;top:625px" width="12" height="12" viewBox="0 0 12 12" ><path d="M6 11.600V.9M.9 6L6 .9l5.100 5.100" fill="none" stroke="#222" stroke-width="1.250"/></svg>
<svg class="abs" style="left:309.5px;top:628.4px" width="7.2" height="5.8" viewBox="0 0 7.2 5.8" ><path d="M0.7 0.6H6.5 L3.6 5.2 Z" fill="none" stroke="#666" stroke-width="1.1" stroke-linejoin="round"/></svg>
<span class="t" style="left:335.2px;top:625.2px;font-size:13px;color:#666;transform:scaleX(0.9589);transform-origin:0 50%;">Název dodavatele</span>
<svg class="abs" style="left:659.4px;top:628.6px" width="7" height="5.8" viewBox="0 0 7 5.8" ><path d="M0.7 0.6H6.3 L3.5 5.2 Z" fill="none" stroke="#666" stroke-width="1.1" stroke-linejoin="round"/></svg>
<span class="t" style="left:685.6px;top:625.2px;font-size:13px;color:#666;transform:scaleX(0.8562);transform-origin:0 50%;">IČO</span>
<svg class="abs" style="left:759.4px;top:628.6px" width="7" height="5.8" viewBox="0 0 7 5.8" ><path d="M0.7 0.6H6.3 L3.5 5.2 Z" fill="none" stroke="#666" stroke-width="1.1" stroke-linejoin="round"/></svg>
<span class="t" style="left:785.2px;top:625.2px;font-size:13px;color:#666;letter-spacing:-0.20px;">Datum podání</span>
<svg class="abs" style="left:909.4px;top:628.6px" width="7" height="5.8" viewBox="0 0 7 5.8" ><path d="M0.7 0.6H6.3 L3.5 5.2 Z" fill="none" stroke="#666" stroke-width="1.1" stroke-linejoin="round"/></svg>
<span class="t" style="left:935.3px;top:625.2px;font-size:13px;color:#666;transform:scaleX(0.9341);transform-origin:0 50%;">Stav</span>
<svg class="abs" style="left:1059.4px;top:628.6px" width="7" height="5.8" viewBox="0 0 7 5.8" ><path d="M0.7 0.6H6.3 L3.5 5.2 Z" fill="none" stroke="#666" stroke-width="1.1" stroke-linejoin="round"/></svg>
<span class="t" style="left:1085.4px;top:625.2px;font-size:13px;color:#666;transform:scaleX(0.9608);transform-origin:0 50%;">Podepsána</span>
<svg class="abs" style="left:1199.4px;top:628.6px" width="7" height="5.8" viewBox="0 0 7 5.8" ><path d="M0.7 0.6H6.3 L3.5 5.2 Z" fill="none" stroke="#666" stroke-width="1.1" stroke-linejoin="round"/></svg>
<span class="t" style="left:1225.2px;top:625.2px;font-size:13px;color:#666;letter-spacing:-0.12px;">Listinná podoba</span>
<svg class="abs" style="left:1385.5px;top:628.6px" width="7" height="5.8" viewBox="0 0 7 5.8" ><path d="M0.7 0.6H6.3 L3.5 5.2 Z" fill="none" stroke="#666" stroke-width="1.1" stroke-linejoin="round"/></svg>
<div class="abs" style="left:925px;top:613px;width:153px;height:38px;border:1px solid #e03131"></div>
<div class="abs" style="left:181px;top:676px;width:1222px;height:1px;background:#dcdcdc"></div>
<svg class="abs" style="left:192.8px;top:661.15px" width="17" height="5.4" viewBox="0 0 17 5.4" ><g fill="none" stroke="#1d75b3" stroke-width="1.050"><ellipse cx="2.450" cy="2.700" rx="1.800" ry="1.680"/><ellipse cx="8.200" cy="2.700" rx="1.800" ry="1.680"/><ellipse cx="14" cy="2.700" rx="1.800" ry="1.680"/></g></svg>
<svg class="abs" style="left:219px;top:656px" width="16" height="16" viewBox="0 0 16 16" ><circle cx="8" cy="8" r="7.400" fill="none" stroke="#1d75b3" stroke-width="1.100"/><path d="M7.300 6.300c.9-.1 1.100.2 1 .9L7.900 10c-.1.800.2 1.100 1 .9" fill="none" stroke="#1d75b3" stroke-width="1.050" stroke-linecap="round"/><circle cx="8" cy="4.300" r=".750" fill="#1d75b3"/></svg>
<span class="t" style="left:255.1px;top:658.0px;font-size:13px;letter-spacing:-0.35px;">001</span>
<span class="t" style="left:335.2px;top:658.0px;font-size:13px;letter-spacing:-0.16px;">Dodavatel - školení 2</span>
<span class="t" style="left:685.6px;top:658.0px;font-size:13px;letter-spacing:-0.08px;">12345678</span>
<span class="t" style="left:785.2px;top:658.0px;font-size:13px;letter-spacing:-0.02px;">11. 6. 2025 12:54</span>
<span class="t" style="left:935.3px;top:658.0px;font-size:13px;transform:scaleX(0.9573);transform-origin:0 50%;">Otevřena</span>
<svg class="abs" style="left:1143.2px;top:658.8px" width="9" height="8.4" viewBox="0 0 9 8.4" ><path d="M0.900 0.900L8.100 7.500M8.100 0.900L0.900 7.500" stroke="#cc2424" stroke-width="2.100" stroke-linecap="butt"/></svg>
<svg class="abs" style="left:1306px;top:658.8px" width="9" height="8.4" viewBox="0 0 9 8.4" ><path d="M0.900 0.900L8.100 7.500M8.100 0.900L0.900 7.500" stroke="#cc2424" stroke-width="2.100" stroke-linecap="butt"/></svg>
<div class="abs" style="left:181px;top:701px;width:1222px;height:1px;background:#dcdcdc"></div>
<svg class="abs" style="left:192.8px;top:686.15px" width="17" height="5.4" viewBox="0 0 17 5.4" ><g fill="none" stroke="#1d75b3" stroke-width="1.050"><ellipse cx="2.450" cy="2.700" rx="1.800" ry="1.680"/><ellipse cx="8.200" cy="2.700" rx="1.800" ry="1.680"/><ellipse cx="14" cy="2.700" rx="1.800" ry="1.680"/></g></svg>
<svg class="abs" style="left:219px;top:681px" width="16" height="16" viewBox="0 0 16 16" ><circle cx="8" cy="8" r="7.400" fill="none" stroke="#1d75b3" stroke-width="1.100"/><path d="M7.300 6.300c.9-.1 1.100.2 1 .9L7.900 10c-.1.800.2 1.100 1 .9" fill="none" stroke="#1d75b3" stroke-width="1.050" stroke-linecap="round"/><circle cx="8" cy="4.300" r=".750" fill="#1d75b3"/></svg>
<span class="t" style="left:255.1px;top:683.0px;font-size:13px;letter-spacing:-0.35px;">002</span>
<span class="t" style="left:335.2px;top:683.0px;font-size:13px;letter-spacing:-0.16px;">Dodavatel - školení 3</span>
<span class="t" style="left:685.6px;top:683.0px;font-size:13px;letter-spacing:-0.08px;">12345678</span>
<span class="t" style="left:785.2px;top:683.0px;font-size:13px;letter-spacing:-0.02px;">11. 6. 2025 12:55</span>
<span class="t" style="left:935.3px;top:683.0px;font-size:13px;transform:scaleX(0.9573);transform-origin:0 50%;">Otevřena</span>
<svg class="abs" style="left:1143.2px;top:683.8px" width="9" height="8.4" viewBox="0 0 9 8.4" ><path d="M0.900 0.900L8.100 7.500M8.100 0.900L0.900 7.500" stroke="#cc2424" stroke-width="2.100" stroke-linecap="butt"/></svg>
<svg class="abs" style="left:1306px;top:683.8px" width="9" height="8.4" viewBox="0 0 9 8.4" ><path d="M0.900 0.900L8.100 7.500M8.100 0.900L0.900 7.500" stroke="#cc2424" stroke-width="2.100" stroke-linecap="butt"/></svg>
<div class="abs" style="left:181px;top:726px;width:1222px;height:1px;background:#dcdcdc"></div>
<svg class="abs" style="left:192.8px;top:711.15px" width="17" height="5.4" viewBox="0 0 17 5.4" ><g fill="none" stroke="#1d75b3" stroke-width="1.050"><ellipse cx="2.450" cy="2.700" rx="1.800" ry="1.680"/><ellipse cx="8.200" cy="2.700" rx="1.800" ry="1.680"/><ellipse cx="14" cy="2.700" rx="1.800" ry="1.680"/></g></svg>
<svg class="abs" style="left:219px;top:706px" width="16" height="16" viewBox="0 0 16 16" ><circle cx="8" cy="8" r="7.400" fill="none" stroke="#1d75b3" stroke-width="1.100"/><path d="M7.300 6.300c.9-.1 1.100.2 1 .9L7.900 10c-.1.800.2 1.100 1 .9" fill="none" stroke="#1d75b3" stroke-width="1.050" stroke-linecap="round"/><circle cx="8" cy="4.300" r=".750" fill="#1d75b3"/></svg>
<span class="t" style="left:255.1px;top:708.0px;font-size:13px;letter-spacing:-0.35px;">003</span>
<span class="t" style="left:335.2px;top:708.0px;font-size:13px;letter-spacing:-0.16px;">Dodavatel - školení 5</span>
<span class="t" style="left:685.6px;top:708.0px;font-size:13px;letter-spacing:-0.08px;">12345678</span>
<span class="t" style="left:785.2px;top:708.0px;font-size:13px;letter-spacing:-0.02px;">11. 6. 2025 12:56</span>
<span class="t" style="left:935.3px;top:708.0px;font-size:13px;transform:scaleX(0.9573);transform-origin:0 50%;">Otevřena</span>
<svg class="abs" style="left:1143.2px;top:708.8px" width="9" height="8.4" viewBox="0 0 9 8.4" ><path d="M0.900 0.900L8.100 7.500M8.100 0.900L0.900 7.500" stroke="#cc2424" stroke-width="2.100" stroke-linecap="butt"/></svg>
<svg class="abs" style="left:1306px;top:708.8px" width="9" height="8.4" viewBox="0 0 9 8.4" ><path d="M0.900 0.900L8.100 7.500M8.100 0.900L0.900 7.500" stroke="#cc2424" stroke-width="2.100" stroke-linecap="butt"/></svg>
<div class="abs" style="left:181px;top:751px;width:1222px;height:1px;background:#dcdcdc"></div>
<svg class="abs" style="left:192.8px;top:736.15px" width="17" height="5.4" viewBox="0 0 17 5.4" ><g fill="none" stroke="#1d75b3" stroke-width="1.050"><ellipse cx="2.450" cy="2.700" rx="1.800" ry="1.680"/><ellipse cx="8.200" cy="2.700" rx="1.800" ry="1.680"/><ellipse cx="14" cy="2.700" rx="1.800" ry="1.680"/></g></svg>
<svg class="abs" style="left:219px;top:731px" width="16" height="16" viewBox="0 0 16 16" ><circle cx="8" cy="8" r="7.400" fill="none" stroke="#1d75b3" stroke-width="1.100"/><path d="M7.300 6.300c.9-.1 1.100.2 1 .9L7.900 10c-.1.800.2 1.100 1 .9" fill="none" stroke="#1d75b3" stroke-width="1.050" stroke-linecap="round"/><circle cx="8" cy="4.300" r=".750" fill="#1d75b3"/></svg>
<span class="t" style="left:255.1px;top:733.0px;font-size:13px;letter-spacing:-0.35px;">004</span>
<span class="t" style="left:335.2px;top:733.0px;font-size:13px;letter-spacing:-0.16px;">Dodavatel - školení 6</span>
<span class="t" style="left:685.6px;top:733.0px;font-size:13px;letter-spacing:-0.08px;">45359326</span>
<span class="t" style="left:785.2px;top:733.0px;font-size:13px;letter-spacing:-0.02px;">11. 6. 2025 12:57</span>
<span class="t" style="left:935.3px;top:733.0px;font-size:13px;transform:scaleX(0.9573);transform-origin:0 50%;">Otevřena</span>
<svg class="abs" style="left:1143.2px;top:733.8px" width="9" height="8.4" viewBox="0 0 9 8.4" ><path d="M0.900 0.900L8.100 7.500M8.100 0.900L0.900 7.500" stroke="#cc2424" stroke-width="2.100" stroke-linecap="butt"/></svg>
<svg class="abs" style="left:1306px;top:733.8px" width="9" height="8.4" viewBox="0 0 9 8.4" ><path d="M0.900 0.900L8.100 7.500M8.100 0.900L0.900 7.500" stroke="#cc2424" stroke-width="2.100" stroke-linecap="butt"/></svg>
<div class="abs" style="left:181px;top:776px;width:1222px;height:1px;background:#dcdcdc"></div>
<svg class="abs" style="left:192.8px;top:761.15px" width="17" height="5.4" viewBox="0 0 17 5.4" ><g fill="none" stroke="#1d75b3" stroke-width="1.050"><ellipse cx="2.450" cy="2.700" rx="1.800" ry="1.680"/><ellipse cx="8.200" cy="2.700" rx="1.800" ry="1.680"/><ellipse cx="14" cy="2.700" rx="1.800" ry="1.680"/></g></svg>
<svg class="abs" style="left:219px;top:756px" width="16" height="16" viewBox="0 0 16 16" ><circle cx="8" cy="8" r="7.400" fill="none" stroke="#1d75b3" stroke-width="1.100"/><path d="M7.300 6.300c.9-.1 1.100.2 1 .9L7.900 10c-.1.800.2 1.100 1 .9" fill="none" stroke="#1d75b3" stroke-width="1.050" stroke-linecap="round"/><circle cx="8" cy="4.300" r=".750" fill="#1d75b3"/></svg>
<span class="t" style="left:255.1px;top:758.0px;font-size:13px;letter-spacing:-0.35px;">005</span>
<span class="t" style="left:335.2px;top:758.0px;font-size:13px;letter-spacing:-0.16px;">Dodavatel - školení 7</span>
<span class="t" style="left:685.6px;top:758.0px;font-size:13px;letter-spacing:-0.08px;">12345678</span>
<span class="t" style="left:785.2px;top:758.0px;font-size:13px;letter-spacing:-0.02px;">11. 6. 2025 12:58</span>
<span class="t" style="left:935.3px;top:758.0px;font-size:13px;transform:scaleX(0.9573);transform-origin:0 50%;">Otevřena</span>
<svg class="abs" style="left:1143.2px;top:758.8px" width="9" height="8.4" viewBox="0 0 9 8.4" ><path d="M0.900 0.900L8.100 7.500M8.100 0.900L0.900 7.500" stroke="#cc2424" stroke-width="2.100" stroke-linecap="butt"/></svg>
<svg class="abs" style="left:1306px;top:758.8px" width="9" height="8.4" viewBox="0 0 9 8.4" ><path d="M0.900 0.900L8.100 7.500M8.100 0.900L0.900 7.500" stroke="#cc2424" stroke-width="2.100" stroke-linecap="butt"/></svg>
<div class="abs" style="left:181px;top:801px;width:1222px;height:1px;background:#dcdcdc"></div>
<svg class="abs" style="left:192.8px;top:786.15px" width="17" height="5.4" viewBox="0 0 17 5.4" ><g fill="none" stroke="#1d75b3" stroke-width="1.050"><ellipse cx="2.450" cy="2.700" rx="1.800" ry="1.680"/><ellipse cx="8.200" cy="2.700" rx="1.800" ry="1.680"/><ellipse cx="14" cy="2.700" rx="1.800" ry="1.680"/></g></svg>
<svg class="abs" style="left:219px;top:781px" width="16" height="16" viewBox="0 0 16 16" ><circle cx="8" cy="8" r="7.400" fill="none" stroke="#1d75b3" stroke-width="1.100"/><path d="M7.300 6.300c.9-.1 1.100.2 1 .9L7.900 10c-.1.800.2 1.100 1 .9" fill="none" stroke="#1d75b3" stroke-width="1.050" stroke-linecap="round"/><circle cx="8" cy="4.300" r=".750" fill="#1d75b3"/></svg>
<span class="t" style="left:255.1px;top:783.0px;font-size:13px;letter-spacing:-0.35px;">006</span>
<span class="t" style="left:335.2px;top:783.0px;font-size:13px;letter-spacing:-0.16px;">Dodavatel - školení 8</span>
<span class="t" style="left:685.6px;top:783.0px;font-size:13px;letter-spacing:-0.08px;">12345678</span>
<span class="t" style="left:785.2px;top:783.0px;font-size:13px;letter-spacing:-0.02px;">11. 6. 2025 12:58</span>
<span class="t" style="left:935.3px;top:783.0px;font-size:13px;letter-spacing:-0.17px;">Otevírání zahájeno</span>
<svg class="abs" style="left:1143.2px;top:783.8px" width="9" height="8.4" viewBox="0 0 9 8.4" ><path d="M0.900 0.900L8.100 7.500M8.100 0.900L0.900 7.500" stroke="#cc2424" stroke-width="2.100" stroke-linecap="butt"/></svg>
<svg class="abs" style="left:1305.7px;top:783.8px" width="10.5" height="8.4" viewBox="0 0 10.5 8.4" ><path d="M0.800 4.600L3.800 7.300L9.800 0.800" fill="none" stroke="#2eb52e" stroke-width="2.200"/></svg>
<svg class="abs" style="left:192.8px;top:811.15px" width="17" height="5.4" viewBox="0 0 17 5.4" ><g fill="none" stroke="#1d75b3" stroke-width="1.050"><ellipse cx="2.450" cy="2.700" rx="1.800" ry="1.680"/><ellipse cx="8.200" cy="2.700" rx="1.800" ry="1.680"/><ellipse cx="14" cy="2.700" rx="1.800" ry="1.680"/></g></svg>
<svg class="abs" style="left:219px;top:806px" width="16" height="16" viewBox="0 0 16 16" ><circle cx="8" cy="8" r="7.400" fill="none" stroke="#1d75b3" stroke-width="1.100"/><path d="M7.300 6.300c.9-.1 1.100.2 1 .9L7.900 10c-.1.800.2 1.100 1 .9" fill="none" stroke="#1d75b3" stroke-width="1.050" stroke-linecap="round"/><circle cx="8" cy="4.300" r=".750" fill="#1d75b3"/></svg>
<span class="t" style="left:255.1px;top:808.0px;font-size:13px;letter-spacing:-0.35px;">007</span>
<span class="t" style="left:335.2px;top:808.0px;font-size:13px;letter-spacing:-0.16px;">Dodavatel - školení 8</span>
<span class="t" style="left:685.6px;top:808.0px;font-size:13px;letter-spacing:-0.08px;">12345678</span>
<span class="t" style="left:785.2px;top:808.0px;font-size:13px;letter-spacing:-0.02px;">11. 6. 2025 12:58</span>
<span class="t" style="left:935.3px;top:808.0px;font-size:13px;transform:scaleX(0.9573);transform-origin:0 50%;">Otevřena</span>
<svg class="abs" style="left:1143.2px;top:808.8px" width="9" height="8.4" viewBox="0 0 9 8.4" ><path d="M0.900 0.900L8.100 7.500M8.100 0.900L0.900 7.500" stroke="#cc2424" stroke-width="2.100" stroke-linecap="butt"/></svg>
<svg class="abs" style="left:1306px;top:808.8px" width="9" height="8.4" viewBox="0 0 9 8.4" ><path d="M0.900 0.900L8.100 7.500M8.100 0.900L0.900 7.500" stroke="#cc2424" stroke-width="2.100" stroke-linecap="butt"/></svg>
</section>
</main>
</body>
</html>
